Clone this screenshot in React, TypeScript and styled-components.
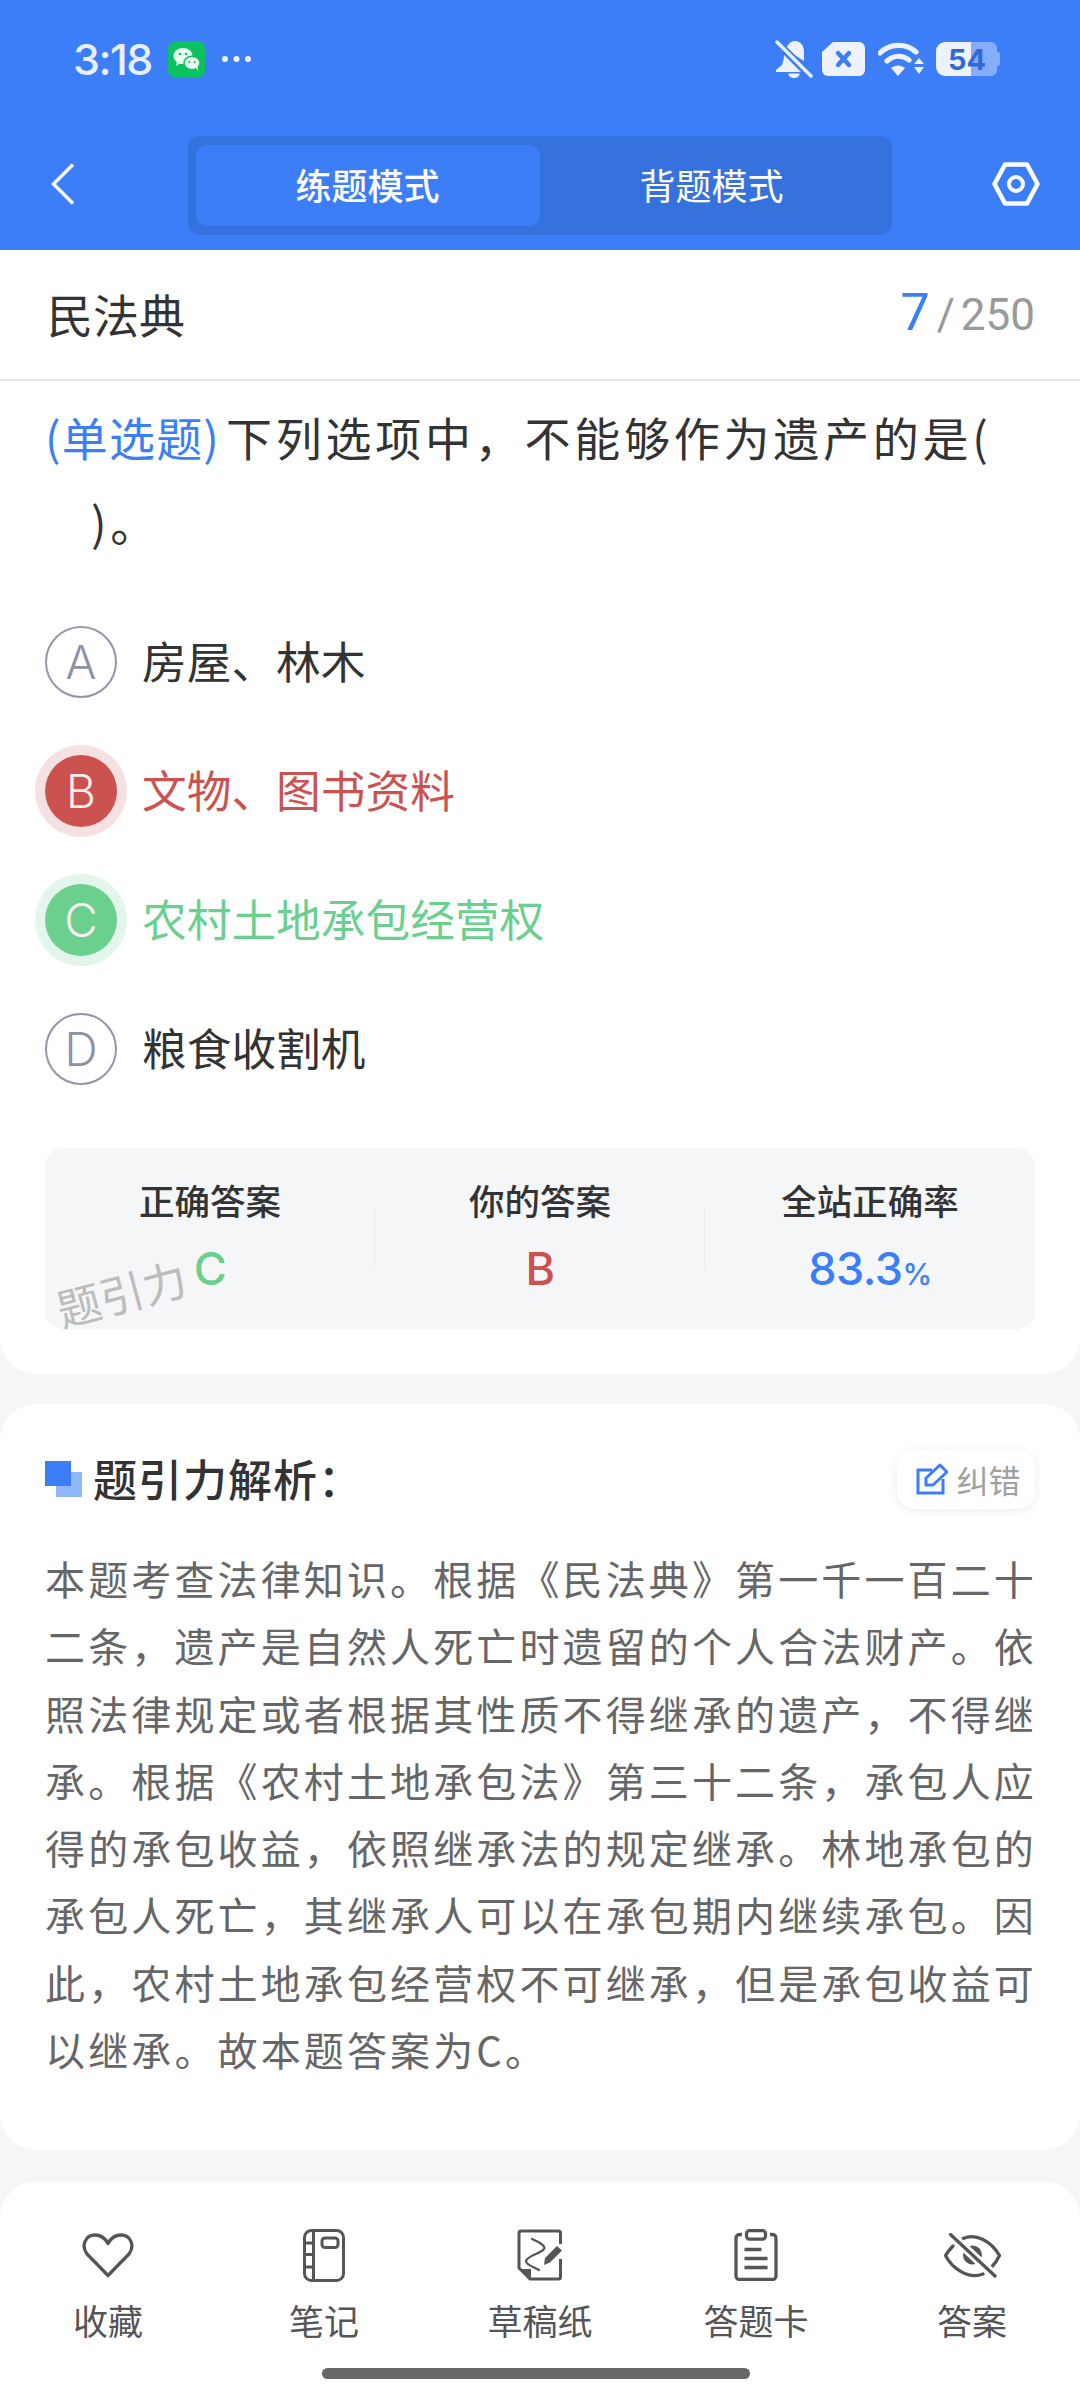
import React from "react";
import styled, { createGlobalStyle } from "styled-components";

const CJK = `"Noto Sans CJK SC", "Noto Sans", sans-serif`;
const LATIN = `Inter, "Noto Sans CJK SC", sans-serif`;

const Global = createGlobalStyle`
  html, body { margin: 0; padding: 0; background: #f4f6f8; }
  * { box-sizing: border-box; }
`;

const Page = styled.div`
  width: 1080px;
  height: 2400px;
  overflow: hidden;
  display: flex;
  flex-direction: column;
  background: #f4f6f8;
  font-family: ${CJK};
`;

const Header = styled.header`
  height: 250px;
  flex: none;
  background: #3b7ef8;
  display: flex;
  flex-direction: column;
`;

const StatusBar = styled.div`
  height: 136px;
  padding: 0 80px 18px 73px;
  display: flex;
  align-items: center;
  justify-content: space-between;
`;

const StatusGroup = styled.div`
  display: flex;
  align-items: center;
`;

const StatusIcon = styled.svg<{ $mr?: number }>`
  flex: none;
  margin-right: ${(p) => p.$mr ?? 0}px;
`;

const Clock = styled.span`
  font-family: ${LATIN};
  font-size: 43px;
  font-weight: 500;
  color: #e8efff;
  letter-spacing: -1.5px;
  margin-right: 16px;
`;

const NavBar = styled.div`
  flex: 1;
  padding: 0 40px 15px 51px;
  display: flex;
  align-items: center;
  justify-content: space-between;
`;

const NavIcon = styled.svg`
  flex: none;
  margin-bottom: 3px;
`;

const Tabs = styled.div`
  width: 704px;
  height: 99px;
  margin-left: 12px;
  padding: 9px 8px;
  border-radius: 12px;
  background: #3672de;
  display: grid;
  grid-template-columns: 1fr 1fr;
`;

const Tab = styled.div<{ $active?: boolean }>`
  border-radius: 12px;
  padding-bottom: 4px;
  background: ${(p) => (p.$active ? "#3b7ef8" : "transparent")};
  display: flex;
  align-items: center;
  justify-content: center;
  color: #fff;
  font-size: 36px;
  font-weight: ${(p) => (p.$active ? 500 : 400)};
`;

const Sheet = styled.section`
  flex: none;
  height: 1124px;
  background: #fff;
  border-radius: 0 0 36px 36px;
  display: flex;
  flex-direction: column;
`;

const TitleBar = styled.div`
  height: 131px;
  flex: none;
  padding: 0 45px 4px 47px;
  border-bottom: 2px solid #e4e5e7;
  display: flex;
  align-items: center;
  justify-content: space-between;
`;

const Title = styled.h1`
  margin: 0;
  font-size: 46px;
  font-weight: 400;
  color: #333;
`;

const Counter = styled.div`
  display: flex;
  align-items: baseline;
  font-family: Roboto, sans-serif;
  color: #999;
  font-size: 44px;
`;

const CounterNow = styled.span`
  color: #3b7ef8;
  font-size: 52px;
  margin-right: 7px;
`;

const CounterSlash = styled.span`
  margin-right: 6px;
`;

const Question = styled.p`
  margin: 13px 0 0;
  padding: 0 45px;
  font-size: 46px;
  line-height: 85px;
  letter-spacing: 3.75px;
  color: #333;
`;

const QType = styled.span`
  color: #3b7ef8;
  letter-spacing: 1.2px;
  margin-right: 6px;
`;

const Indent = styled.span`
  padding-left: 46px;
`;

const Options = styled.div`
  margin-top: 62px;
  padding: 0 45px;
  display: flex;
  flex-direction: column;
  gap: 57px;
`;

type Tone = "plain" | "wrong" | "right";
const toneColor: Record<Tone, string> = { plain: "#333", wrong: "#cb524e", right: "#6bcf8e" };
const toneFill: Record<Tone, string> = { plain: "#fff", wrong: "#cb524e", right: "#6bcf8e" };
const toneRing: Record<Tone, string> = { plain: "none", wrong: "0 0 0 10px #f5e1e2", right: "0 0 0 10px #e2f6eb" };

const Option = styled.div`
  height: 72px;
  display: flex;
  align-items: center;
  gap: 25px;
`;

const Badge = styled.span<{ $tone: Tone }>`
  flex: none;
  width: 72px;
  height: 72px;
  border-radius: 50%;
  background: ${(p) => toneFill[p.$tone]};
  border: ${(p) => (p.$tone === "plain" ? "2px solid #9396aa" : "none")};
  box-shadow: ${(p) => toneRing[p.$tone]};
  color: ${(p) => (p.$tone === "plain" ? "#8e91a6" : "#f7eeee")};
  display: flex;
  align-items: center;
  justify-content: center;
  font-family: Inter, sans-serif;
  font-weight: 300;
  font-size: 46px;
`;

const OptionText = styled.span<{ $tone: Tone }>`
  font-size: 44.7px;
  padding-bottom: 5px;
  color: ${(p) => toneColor[p.$tone]};
`;

const Stats = styled.div`
  position: relative;
  margin: 63px 45px 0;
  height: 181px;
  border-radius: 18px;
  background: #f4f6f8;
  display: grid;
  grid-template-columns: 1fr 1fr 1fr;
`;

const Stat = styled.div<{ $divider?: boolean }>`
  position: relative;
  display: flex;
  flex-direction: column;
  align-items: center;
  padding-top: 27px;
  gap: 17px;
  &::after {
    content: "";
    display: ${(p) => (p.$divider ? "block" : "none")};
    position: absolute;
    right: 0;
    top: 60px;
    height: 60px;
    width: 1px;
    background: #e9ebee;
  }
`;

const StatLabel = styled.span`
  font-size: 35.5px;
  line-height: 50px;
  font-weight: 500;
  color: #333;
`;

const StatValue = styled.span<{ $color: string }>`
  font-family: ${LATIN};
  font-size: 45px;
  line-height: 54px;
  font-weight: 500;
  letter-spacing: -0.5px;
  color: ${(p) => p.$color};
`;

const Percent = styled.span`
  font-size: 30px;
`;

const Watermark = styled.span`
  position: absolute;
  left: 10px;
  top: 119px;
  font-size: 44px;
  line-height: 50px;
  color: #bcbcbc;
  transform: rotate(-15deg);
`;

const Card = styled.section`
  margin-top: 30px;
  flex: none;
  height: 746px;
  background: #fff;
  border-radius: 36px;
  padding: 45px 45px 0;
`;

const CardHead = styled.div`
  height: 60px;
  display: flex;
  align-items: center;
  justify-content: space-between;
`;

const CardTitleWrap = styled.div`
  display: flex;
  align-items: center;
  gap: 11px;
`;

const CardTitle = styled.h2`
  margin: 0;
  padding-bottom: 3px;
  font-size: 44px;
  font-weight: 500;
  color: #333;
  letter-spacing: 1px;
`;

const Squares = styled.div`
  width: 37px;
  height: 36px;
  background: linear-gradient(#3b7ef8, #3b7ef8) 0 0 / 26px 25px no-repeat,
    linear-gradient(#8fb8fb, #8fb8fb) 11px 11px / 26px 25px no-repeat;
`;

const FixButton = styled.div`
  width: 138px;
  height: 60px;
  padding-left: 5px;
  border-radius: 18px;
  background: #fff;
  box-shadow: 0 2px 10px rgba(0, 0, 0, 0.08);
  display: flex;
  align-items: center;
  justify-content: center;
  gap: 8px;
  font-size: 32px;
  color: #a0a0a0;
`;

const Body = styled.p`
  margin: 36px -6px 0 0;
  font-size: 40px;
  line-height: 67.3px;
  letter-spacing: 3.13px;
  color: #666;
`;

const BottomBar = styled.nav`
  position: relative;
  margin-top: 32px;
  flex: 1;
  background: #fff;
  border-radius: 36px 36px 0 0;
  padding: 43px 0 0;
  display: grid;
  grid-template-columns: repeat(5, 216px);
  align-content: start;
`;

const BarItem = styled.div`
  display: flex;
  flex-direction: column;
  align-items: center;
  gap: 10px;
  font-size: 35px;
  line-height: 50px;
  color: #555;
`;

const IconSlot = styled.div`
  height: 60px;
  display: flex;
  align-items: center;
  justify-content: center;
`;

const HomeIndicator = styled.div`
  position: absolute;
  left: 322px;
  bottom: 21px;
  width: 428px;
  height: 11px;
  border-radius: 6px;
  background: #666;
`;

const Wechat = () => (
  <StatusIcon $mr={16} width="37" height="37" viewBox="0 0 37 37">
    <rect width="37" height="37" rx="8" fill="#0bc160" />
    <ellipse cx="15" cy="15" rx="9.5" ry="8" fill="#eafff3" />
    <path d="M9 20l-1 5 5-3z" fill="#eafff3" />
    <ellipse cx="24" cy="22" rx="8" ry="6.8" fill="#eafff3" stroke="#0bc160" strokeWidth="1.5" />
    <path d="M28 27l2 3-.4-4.5z" fill="#eafff3" />
    <circle cx="12" cy="13" r="1.3" fill="#0bc160" />
    <circle cx="18" cy="13" r="1.3" fill="#0bc160" />
    <circle cx="21.5" cy="21" r="1.1" fill="#0bc160" />
    <circle cx="26.5" cy="21" r="1.1" fill="#0bc160" />
  </StatusIcon>
);

const Dots = () => (
  <StatusIcon width="31" height="8" viewBox="0 0 31 8">
    <circle cx="4" cy="4" r="3" fill="#f0f4ff" />
    <circle cx="15.500" cy="4" r="3" fill="#f0f4ff" />
    <circle cx="27" cy="4" r="3" fill="#f0f4ff" />
  </StatusIcon>
);

const BellOff = () => (
  <StatusIcon $mr={9} width="38" height="38" viewBox="0 0 38 38">
    <path d="M11 10c1-5 4-9 9-9 6 0 9 5 9 11v9zM9 15l17 17H1v-2l6-5c1-3 2-6 2-10z" fill="#edf2fe" />
    <path d="M13 33.500h12c-1 3-3 4.500-6 4.500s-5-1.500-6-4.500z" fill="#edf2fe" />
    <path d="M2 2l34 34" stroke="#3b7ef8" strokeWidth="7" />
    <path d="M2 2l34 34" stroke="#edf2fe" strokeWidth="3.400" strokeLinecap="round" />
  </StatusIcon>
);

const Sim = () => (
  <StatusIcon $mr={13} width="43" height="34" viewBox="0 0 43 34">
    <path d="M11 0h26a6 6 0 0 1 6 6v22a6 6 0 0 1-6 6H6a6 6 0 0 1-6-6V10z" fill="#edf2fe" />
    <path d="M16 11l11 12M27 11L16 23" stroke="#3b7ef8" strokeWidth="4.400" strokeLinecap="round" />
  </StatusIcon>
);

const Wifi = () => (
  <StatusIcon $mr={11} width="47" height="34" viewBox="0 0 47 34">
    <path d="M2 11C12 1 28 1 38 10" stroke="#edf2fe" strokeWidth="5.200" fill="none" strokeLinecap="round" />
    <path d="M9 19c7-6 15-6 22-1" stroke="#edf2fe" strokeWidth="5.200" fill="none" strokeLinecap="round" />
    <path d="M13 26c4-3.500 10-3.500 14 0l-7 8z" fill="#edf2fe" />
    <path d="M41 16l5 6H36zM36 25h10l-5 7z" fill="#edf2fe" />
  </StatusIcon>
);

const Battery = () => (
  <StatusIcon width="64" height="34" viewBox="0 0 64 34">
    <path d="M35 0h20a6 6 0 0 1 6 6v4h1a2 2 0 0 1 2 2v10a2 2 0 0 1-2 2h-1v4a6 6 0 0 1-6 6H35z" fill="#84aefb" />
    <path d="M9 0h26v34H9a9 9 0 0 1-9-9V9a9 9 0 0 1 9-9z" fill="#edf2fe" />
    <text x="31" y="28" textAnchor="middle" fontFamily="Inter, sans-serif" fontSize="29" fontWeight="700" fill="#3369d6">54</text>
  </StatusIcon>
);

const Back = () => (
  <NavIcon width="24" height="42" viewBox="0 0 24 42">
    <path d="M22 1.500L2.500 21 22 40.500" stroke="#fff" strokeWidth="3.400" fill="none" />
  </NavIcon>
);

const Gear = () => (
  <NavIcon width="48" height="44" viewBox="0 0 48 44">
    <path d="M13 2.500h22L45.500 22 35 41.500H13L2.500 22z" stroke="#fff" strokeWidth="4.500" fill="none" strokeLinejoin="round" />
    <circle cx="24" cy="22" r="7" stroke="#fff" strokeWidth="4" fill="none" />
  </NavIcon>
);

const Edit = () => (
  <svg width="32" height="32" viewBox="0 0 32 32" fill="none" stroke="#3b7ef8" strokeWidth="3">
    <path d="M16 7H2v23h25V16" />
    <path d="M10 22v-7L24 2l7 7-14 13z" strokeLinejoin="round" />
  </svg>
);

const Heart = () => (
  <svg width="52" height="45" viewBox="0 0 52 45" fill="none" stroke="#555" strokeWidth="3.300">
    <path d="M26 42.500L5 21C-1 13 3 2 13 2c6 0 10 3 13 8.500C29 5 33 2 39 2c10 0 14 11 8 19z" strokeLinejoin="round" />
  </svg>
);

const Notebook = () => (
  <svg width="42" height="53" viewBox="0 0 42 53" fill="none" stroke="#555" strokeWidth="3">
    <rect x="1.500" y="1.500" width="39" height="50" rx="7" />
    <path d="M10.500 2v49M2 14h8M2 25.500h8M2 38h8" />
    <rect x="19" y="9" width="16" height="9.500" rx="3" />
  </svg>
);

const Draft = () => (
  <svg width="46" height="52" viewBox="0 0 46 52" fill="none" stroke="#555" strokeWidth="3">
    <path d="M43.500 15V4a2 2 0 0 0-2-2H4a2 2 0 0 0-2 2v35l11 11h28.500a2 2 0 0 0 2-2V30" />
    <path d="M3 40h11v9z" fill="#555" stroke="none" />
    <path d="M15 10c7 3 14 7 12 10-2 4-17 7-18 12 0 4 8 6 13 9" strokeWidth="2.200" strokeLinecap="round" />
    <path d="M27 36l1-7L40 17l5 4.500L33 33.500z" fill="#555" stroke="none" />
  </svg>
);

const Board = () => (
  <svg width="44" height="52" viewBox="0 0 44 52" fill="none" stroke="#555" strokeWidth="3.300">
    <path d="M8 5.500H5.500a3.500 3.500 0 0 0-3.500 3.500v38a3.500 3.500 0 0 0 3.500 3.500h33a3.500 3.500 0 0 0 3.500-3.500V9a3.500 3.500 0 0 0-3.500-3.500H36" />
    <rect x="12.500" y="1.700" width="19" height="8.500" rx="3" />
    <path d="M10.500 20.500h17M10.500 29.500h23M10.500 38.500h23" />
  </svg>
);

const EyeOff = () => (
  <svg width="57" height="45" viewBox="0 0 57 45" fill="none" strokeLinecap="round">
    <path d="M19 5.500C32 0 47 8 55.500 22.500c-2 4-4 7.500-7 10.500M9 13C6 16 3.500 19 1.500 22.500 8 35 24 47 39 41" stroke="#555" strokeWidth="3.300" />
    <circle cx="28.500" cy="22" r="9.500" fill="#555" />
    <path d="M6.500 1.500L51 43" stroke="#fff" strokeWidth="9" />
    <path d="M6.500 1.500L51 43" stroke="#555" strokeWidth="3.300" />
  </svg>
);

const options: { key: string; text: string; tone: Tone }[] = [
  { key: "A", text: "房屋、林木", tone: "plain" },
  { key: "B", text: "文物、图书资料", tone: "wrong" },
  { key: "C", text: "农村土地承包经营权", tone: "right" },
  { key: "D", text: "粮食收割机", tone: "plain" },
];

const barItems = [
  { label: "收藏", icon: <Heart /> },
  { label: "笔记", icon: <Notebook /> },
  { label: "草稿纸", icon: <Draft /> },
  { label: "答题卡", icon: <Board /> },
  { label: "答案", icon: <EyeOff /> },
];

export default function App() {
  return (
    <Page>
      <Global />
      <Header>
        <StatusBar>
          <StatusGroup>
            <Clock>3:18</Clock>
            <Wechat />
            <Dots />
          </StatusGroup>
          <StatusGroup>
            <BellOff />
            <Sim />
            <Wifi />
            <Battery />
          </StatusGroup>
        </StatusBar>
        <NavBar>
          <Back />
          <Tabs>
            <Tab $active>练题模式</Tab>
            <Tab>背题模式</Tab>
          </Tabs>
          <Gear />
        </NavBar>
      </Header>
      <Sheet>
        <TitleBar>
          <Title>民法典</Title>
          <Counter>
            <CounterNow>7</CounterNow>
            <CounterSlash>/</CounterSlash>
            250
          </Counter>
        </TitleBar>
        <Question>
          <QType>(单选题)</QType>下列选项中，不能够作为遗产的是(
          <br />
          <Indent>)。</Indent>
        </Question>
        <Options>
          {options.map((o) => (
            <Option key={o.key}>
              <Badge $tone={o.tone}>{o.key}</Badge>
              <OptionText $tone={o.tone}>{o.text}</OptionText>
            </Option>
          ))}
        </Options>
        <Stats>
          <Stat $divider>
            <StatLabel>正确答案</StatLabel>
            <StatValue $color="#6bcf8e">C</StatValue>
          </Stat>
          <Stat $divider>
            <StatLabel>你的答案</StatLabel>
            <StatValue $color="#cb524e">B</StatValue>
          </Stat>
          <Stat>
            <StatLabel>全站正确率</StatLabel>
            <StatValue $color="#3b7ef8">
              83.3<Percent>%</Percent>
            </StatValue>
          </Stat>
          <Watermark>题引力</Watermark>
        </Stats>
      </Sheet>
      <Card>
        <CardHead>
          <CardTitleWrap>
            <Squares />
            <CardTitle>题引力解析：</CardTitle>
          </CardTitleWrap>
          <FixButton>
            <Edit />
            纠错
          </FixButton>
        </CardHead>
        <Body>
          本题考查法律知识。根据《民法典》第一千一百二十二条，遗产是自然人死亡时遗留的个人合法财产。依照法律规定或者根据其性质不得继承的遗产，不得继承。根据《农村土地承包法》第三十二条，承包人应得的承包收益，依照继承法的规定继承。林地承包的承包人死亡，其继承人可以在承包期内继续承包。因此，农村土地承包经营权不可继承，但是承包收益可以继承。故本题答案为C。
        </Body>
      </Card>
      <BottomBar>
        {barItems.map((item) => (
          <BarItem key={item.label}>
            <IconSlot>{item.icon}</IconSlot>
            {item.label}
          </BarItem>
        ))}
        <HomeIndicator />
      </BottomBar>
    </Page>
  );
}
